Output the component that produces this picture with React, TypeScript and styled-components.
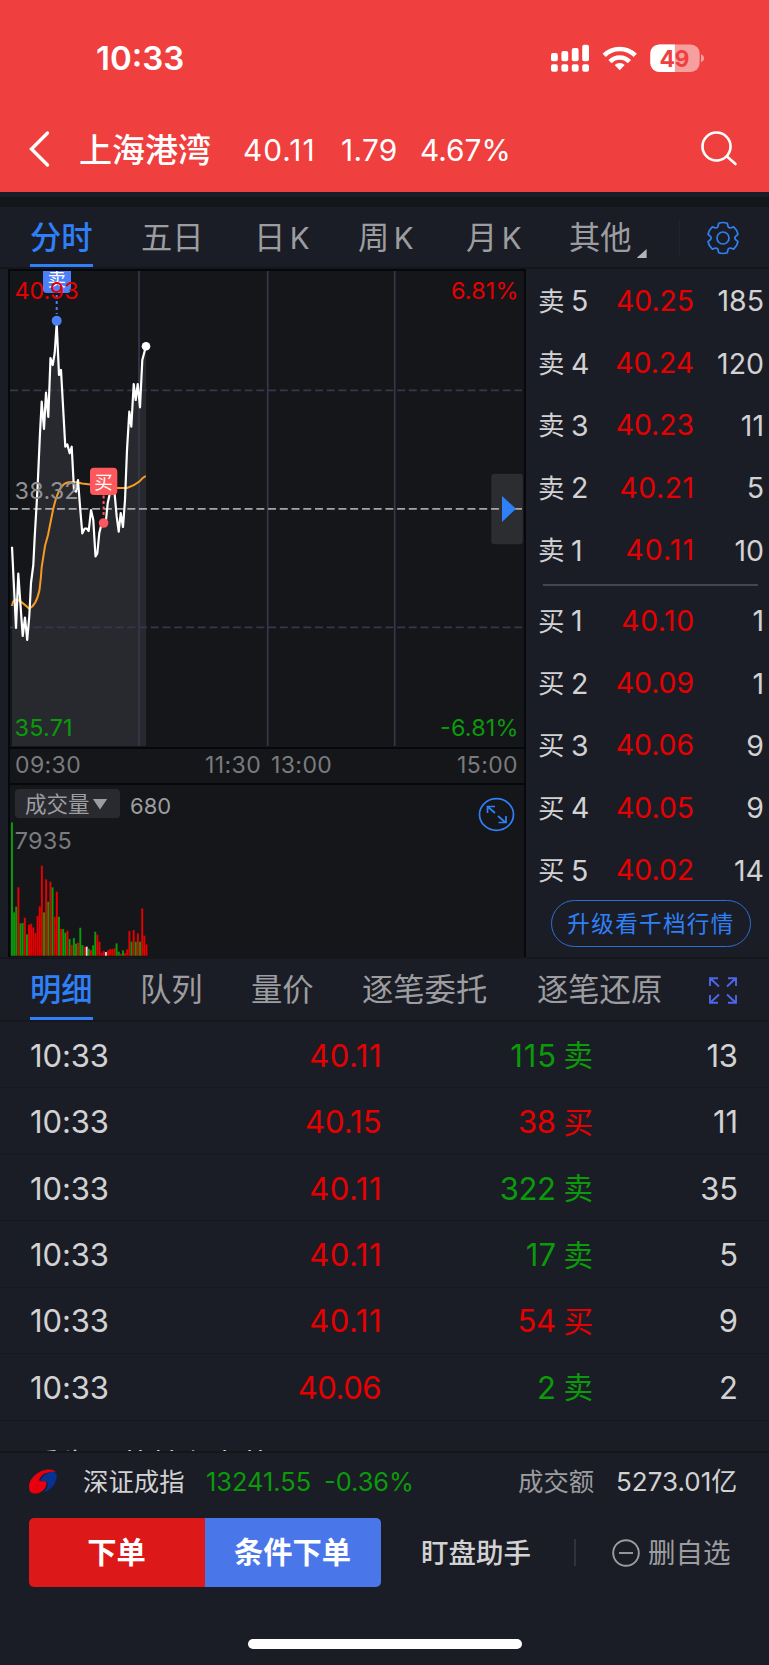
import React from "react";
import styled, { createGlobalStyle } from "styled-components";

const RED = "#e60000";
const GREEN = "#0a9a0a";
const BLUE = "#2f80f7";
const GREY = "#9d9da0";
const LIGHT = "#d2d2d3";
const PANEL = "#1b1d26";
const DARK = "#15161a";

const Global = createGlobalStyle`
  * { box-sizing: border-box; }
  body {
    margin: 0;
    background: ${PANEL};
    font-family: Inter, "Noto Sans CJK SC", sans-serif;
    color: ${LIGHT};
  }
  svg { display: block; flex: none; }
`;

const Page = styled.div`
  width: 769px;
  height: 1665px;
  overflow: hidden;
  display: flex;
  flex-direction: column;
  background: ${PANEL};
  white-space: nowrap;
`;

const Header = styled.header`
  height: 192px;
  background: #ef3f3e;
  color: #fff;
  flex: none;
`;

const StatusBar = styled.div`
  height: 115px;
  padding: 0 65px 0 96px;
  display: flex;
  align-items: center;
  justify-content: space-between;
`;

const Clock = styled.span`
  font-size: 33px;
  font-weight: 600;
`;

const NavBar = styled.div`
  height: 68px;
  padding-left: 28px;
  display: grid;
  align-items: center;
  grid-template-columns: 51px 164px 98px 79px 281px 40px;
`;

const StockName = styled.h1`
  margin: 0;
  padding-top: 1px;
  font-size: 33px;
  line-height: 44px;
  font-weight: 500;
`;

const Quote = styled.span<{ $spacing?: number }>`
  padding-top: 1px;
  font-size: 29.8px;
  line-height: 44px;
  letter-spacing: ${(p) => p.$spacing ?? 0}px;
`;

const Band = styled.div`
  height: 15px;
  flex: none;
  border-top: 5px solid #1a1d26;
  background: #14161a;
`;

const TabBar = styled.nav<{ $h: number; $cols: string }>`
  height: ${(p) => p.$h}px;
  flex: none;
  padding-left: 30px;
  display: grid;
  grid-template-columns: ${(p) => p.$cols};
  border-bottom: 2px solid #15171c;
`;

const Tab = styled.div<{ $active?: boolean }>`
  justify-self: start;
  display: flex;
  align-items: center;
  padding-top: 5px;
  font-size: 31.3px;
  line-height: 51px;
  font-weight: ${(p) => (p.$active ? 500 : 400)};
  color: ${(p) => (p.$active ? BLUE : GREY)};
  border-bottom: 3px solid ${(p) => (p.$active ? BLUE : "transparent")};
  word-spacing: -4.5px;
`;

const Latin = styled.span`
  font-size: 29.5px;
`;

const Corner = styled.i`
  width: 10px;
  height: 9px;
  margin: 31px 0 0 5px;
  background: #b4b4b6;
  clip-path: polygon(100% 0, 100% 100%, 0 100%);
`;

const TabIcon = styled.div<{ $line?: boolean }>`
  display: flex;
  align-items: center;
  padding-left: ${(p) => (p.$line ? 26 : 27)}px;
  margin: 12px 0 11px;
  border-left: 1px solid ${(p) => (p.$line ? "#20232c" : "transparent")};
`;

const Market = styled.section`
  height: 690px;
  flex: none;
  display: flex;
  border-bottom: 2px solid #15171c;
`;

const Charts = styled.div`
  width: 518px;
  margin-left: 8px;
  border: 2px solid #07080b;
  border-bottom: 0;
  background: ${DARK};
`;

const TimeAxis = styled.div`
  height: 38px;
  padding: 0 6px 2px 5px;
  border-top: 2px solid #07080b;
  border-bottom: 2px solid #07080b;
  display: grid;
  grid-template-columns: 190px 66px 1fr auto;
  align-items: center;
  font-size: 23px;
  letter-spacing: 0.4px;
  color: #7a7b7e;
`;

const VolumeHead = styled.div`
  height: 33px;
  padding: 4px 9px 0 5px;
  display: flex;
  align-items: flex-start;
`;

const Chip = styled.button`
  width: 105px;
  height: 29px;
  padding: 1px 0 0 10px;
  border: 0;
  border-radius: 4px;
  background: #282a2f;
  color: ${GREY};
  font: inherit;
  font-size: 21.5px;
  line-height: 27px;
  display: flex;
  align-items: center;
`;

const Arrow = styled.i`
  width: 15px;
  height: 11px;
  margin: 0 0 0 3px;
  background: ${GREY};
  clip-path: polygon(0 0, 100% 0, 50% 100%);
`;

const Volume = styled.span`
  flex: 1;
  margin-left: 10px;
  font-size: 22px;
  line-height: 35px;
  color: ${GREY};
`;

const ExpandWrap = styled.div`
  padding-top: 8px;
`;

const Book = styled.aside`
  flex: 1;
  display: flex;
  flex-direction: column;
  padding-top: 0.5px;
`;

const BookRow = styled.div`
  height: 62.4px;
  padding: 0 5px 0 12px;
  display: grid;
  grid-template-columns: 33px 30px 93px 1fr;
  align-items: center;
  font-size: 28.5px;
`;

const Side = styled.span`
  font-size: 26.5px;
  line-height: 40px;
`;

const Price = styled.span<{ $spacing: number }>`
  text-align: right;
  color: ${RED};
  font-size: 28.3px;
  letter-spacing: ${(p) => p.$spacing}px;
  margin-right: ${(p) => -p.$spacing}px;
`;

const Qty = styled.span`
  text-align: right;
`;

const BookLine = styled.div`
  height: 2px;
  margin: 3px 11px 3px 17px;
  background: #434550;
`;

const Upgrade = styled.button`
  width: 200px;
  height: 47px;
  margin: -1px 0 0 25px;
  padding: 0 0 3px;
  border: 1.5px solid #2b6fd0;
  border-radius: 24px;
  background: transparent;
  color: ${BLUE};
  font: inherit;
  font-size: 22.5px;
  letter-spacing: 1.4px;
`;

const Trades = styled.section`
  height: 431px;
  flex: none;
  overflow: hidden;
  border-bottom: 2px solid #14161a;
`;

const TradeRow = styled.div`
  height: 66.45px;
  padding: 1px 31px 0 30px;
  display: grid;
  grid-template-columns: 130px 221.5px 174.5px 37px 1fr;
  align-items: center;
  border-bottom: 1px solid #16181e;
  font-size: 31px;
  letter-spacing: -0.1px;
`;

const Cell = styled.span<{ $color?: string; $spacing?: number }>`
  text-align: right;
  color: ${(p) => p.$color ?? LIGHT};
  letter-spacing: ${(p) => p.$spacing ?? -0.3}px;
  margin-right: ${(p) => -(p.$spacing ?? -0.3)}px;
`;

const TradeTime = styled.span``;

const TradeSide = styled.span<{ $color: string }>`
  justify-self: end;
  font-size: 29.5px;
  line-height: 40px;
  color: ${(p) => p.$color};
`;

const Notice = styled.div`
  padding: 23.6px 30px 0;
  font-size: 30px;
  line-height: 40px;
`;

const Ticker = styled.div`
  height: 56px;
  flex: none;
  padding: 1px 0 0 29px;
  display: grid;
  grid-template-columns: 54px 123px 118px 194px 98px auto;
  align-items: center;
  line-height: 36px;
`;

const TickText = styled.span<{ $color?: string; $size?: number }>`
  font-size: ${(p) => p.$size ?? 25.4}px;
  color: ${(p) => p.$color ?? LIGHT};
`;

const Actions = styled.div`
  height: 69px;
  margin-top: 9px;
  flex: none;
  padding-left: 29px;
  display: flex;
  align-items: center;
`;

const Orders = styled.div`
  width: 352px;
  height: 69px;
  display: flex;
  border-radius: 5px;
  overflow: hidden;
`;

const OrderButton = styled.button<{ $bg: string }>`
  flex: 1;
  border: 0;
  padding: 0 1px 5px 0;
  background: ${(p) => p.$bg};
  color: #fff;
  font: inherit;
  font-size: 29.3px;
  font-weight: 600;
`;

const Helper = styled.span`
  width: 153px;
  margin-left: 40px;
  padding-bottom: 3px;
  font-size: 27.5px;
  font-weight: 500;
`;

const Divider = styled.i`
  width: 2px;
  height: 27px;
  margin-right: 36px;
  background: #30323c;
`;

const Remove = styled.span`
  margin-left: 8px;
  padding-bottom: 3px;
  font-size: 27.5px;
  color: ${GREY};
`;

const HomeBar = styled.div`
  width: 274px;
  height: 10px;
  margin: 52px 0 0 248px;
  flex: none;
  border-radius: 5px;
  background: #fff;
`;

const StatusIcons = () => (
  <svg width="154" height="32" viewBox="550 41 154 32" fill="#fff">
    {[52, 50, 47, 43.7].map((top, i) => (
      <g key={i}>
        <rect x={551 + i * 10.4} y={top} width="6.8" height={60.3 - top} rx="2" />
        <rect x={551 + i * 10.4} y="63.3" width="6.8" height="7.4" rx="2" />
      </g>
    ))}
    <g fill="none" stroke="#fff" strokeWidth="4.6">
      <path d="M604.2 54.4a22 22 0 0 1 31 0" />
      <path d="M610 60.6a13.6 13.6 0 0 1 19.4 0" />
    </g>
    <path d="M619.7 69.3l-5-5.2a7.2 7.2 0 0 1 10 0z" />
    <rect x="650.3" y="43.4" width="49.4" height="27.6" rx="9" opacity=".5" />
    <path d="M659.3 43.4h15.6V71h-15.6a9 9 0 0 1-9-9v-9.6a9 9 0 0 1 9-9z" />
    <path d="M701 53.4q3 .8 3 3.8t-3 3.8z" opacity=".5" />
    <text x="659.5" y="65.6" fontSize="23" fontWeight="700" fill="#ef3f3e" textLength="30">49</text>
  </svg>
);

const gearPath = (() => {
  const pts: string[] = [];
  for (let i = 0; i < 6; i++) {
    const a = (i * Math.PI) / 3 - Math.PI / 2;
    const at = (r: number, d: number) =>
      `${(17 + r * Math.cos(a + d)).toFixed(2)} ${(17 + r * Math.sin(a + d)).toFixed(2)}`;
    pts.push(
      `${i ? "L" : "M"}${at(12.4, -0.42)}L${at(15.4, -0.28)}Q${at(16.2, 0)} ${at(15.4, 0.28)}L${at(12.4, 0.42)}Q${at(11.4, 0.52)} ${at(12.4, 0.62)}`
    );
  }
  return pts.join("") + "Z";
})();

const Gear = () => (
  <svg width="34" height="34" viewBox="0 0 34 34" fill="none" stroke={BLUE} strokeWidth="1.7" strokeLinejoin="round">
    <path d={gearPath} />
    <circle cx="17" cy="17" r="6" />
  </svg>
);

const priceLine =
  "12,546.7 16,628 18.3,573.5 22.7,636 25,617.5 27.2,640 29.3,616 31,583 33.3,565 34.7,537 36.7,503 37.6,487 40,433 41.7,401.7 44,429 46,392.7 48.3,417 50.5,358 52.7,365 54.7,353 56.7,323 59,375 61,370 65.3,446.7 67.3,444.3 69.7,453.3 71.7,446.7 74,490 76,491.7 78,480 80.3,510 82.3,533.3 84.7,528.5 86.7,528.5 88.7,531 91,510 93.3,520 95.5,556.5 97.3,553.5 99.3,533 101.3,525 103.7,523 106,520 107.7,503 110,493 114.3,490 116.7,516.7 118.7,531.7 120.7,513 123,527 125,500 127,450 129.3,411.7 131.3,426.7 133.7,384 135.7,400 137.7,384 140,407.3 142.3,360 146,346";
const averageLine =
  "M12 606Q13 598 18 600Q22 602 29 608.5Q36 606 39.5 590Q41 578 41.7 567L45 546L48 535L53 510C57 492 61 485 66 483Q72 481 82 483.5L103 486L115 488H127Q134 486 140 481Q144 476 146 476.5";

const PriceChart = () => (
  <svg width="514" height="476" viewBox="10 271 514 476">
    <polygon points={`12,746 ${priceLine} 146,746`} fill="#28292f" />
    <g stroke="#35374a" strokeWidth="1.7">
      <path d="M139 271V746M267.7 271V746M394.7 271V746" />
      <path d="M10 390.3H522M10 627.3H522" strokeDasharray="8 3.73" />
    </g>
    <rect x="491.3" y="473.7" width="31.5" height="70.5" rx="3" fill="#2c2d31" />
    <path d="M10 508.8H522" stroke="#a5a5a8" strokeWidth="1.8" strokeDasharray="8 3.73" />
    <path d="M502 496L516 508.8L502 522z" fill={BLUE} />
    <path d={averageLine} fill="none" stroke="#f79a22" strokeWidth="2" />
    <polyline points={priceLine} fill="none" stroke="#fff" strokeWidth="2.2" strokeLinejoin="round" />
    <circle cx="146" cy="346.3" r="4.3" fill="#fff" />
    <rect x="43" y="262" width="28" height="31" rx="4" fill="#4c80f8" />
    <text x="47.5" y="286" fontSize="18.5" fill="#fff">卖</text>
    <path d="M56.7 295V314" stroke="#4c80f8" strokeWidth="2" strokeDasharray="3 3" />
    <circle cx="56.7" cy="320.8" r="5" fill="#4c80f8" />
    <g fontSize="23.4">
      <text x="14.6" y="299" fill={RED} textLength="64">40.93</text>
      <text x="14.6" y="499" fill="#909093" textLength="64">38.32</text>
      <text x="14.6" y="735.8" fill={GREEN} textLength="58">35.71</text>
      <text x="451" y="299" fill={RED} textLength="67.5">6.81%</text>
      <text x="440" y="735.8" fill={GREEN} textLength="78.5">-6.81%</text>
    </g>
    <rect x="90" y="467.7" width="27.3" height="27.3" rx="4" fill="#ff585c" />
    <text x="94.3" y="488.5" fontSize="18.5" fill="#fff">买</text>
    <path d="M103.6 495.5V515" stroke="#ff585c" strokeWidth="2" strokeDasharray="3 2.5" />
    <circle cx="103.6" cy="523" r="4.8" fill="#ff585c" />
  </svg>
);

const bars =
  "g400 g130 g147 r205 g97 g98 r114 g64 r93 r96 r85 r68 r119 r148 r270 g130 r229 g162 r222 g205 r116 r192 g117 r80 g80 g69 r75 g50 r32 g53 g36 r39 g84 g32 r27 w27 g21 r17 g31 g72 r63 r42 r9 r14 w11 r16 r20 r20 r22 g37 g12 r6 g16 r8 r19 r74 g42 r77 g42 r67 g42 r142 r60 r34"
    .split(" ")
    .map((s) => ({ fill: { g: GREEN, r: RED, w: "#ddd" }[s[0]], h: Number(s.slice(1)) / 3 }));

const VolumeChart = () => (
  <svg width="514" height="138" viewBox="10 818 514 138">
    {bars.map((b, i) => (
      <rect key={i} x={11 + i * 2.135} y={955.7 - b.h} width="1.95" height={b.h} fill={b.fill} />
    ))}
    <text x="14.8" y="849" fontSize="23.4" fill="#7a7b7e" textLength="57">7935</text>
  </svg>
);

const Logo = () => (
  <svg width="28" height="26" viewBox="0 0 28 26">
    <path d="M14 23.5C20 19 20 13 16 12L11 12C13 6 20 3 24 2.5Q28.5 4 27.5 9C26 17 20 22 14 23.5z" fill="#063295" />
    <path d="M0 18C0 9 10 .5 20 .5Q25 .5 27 3C22 2 15 4 12.5 7C9 11 10 13 14 12Q19 12 17 17C15 22 10 25 5 24.5Q0 24 0 18z" fill="#e8000f" />
  </svg>
);

const asks = [
  ["卖", "5", "40.25", "185"],
  ["卖", "4", "40.24", "120"],
  ["卖", "3", "40.23", "11"],
  ["卖", "2", "40.21", "5"],
  ["卖", "1", "40.11", "10"],
];
const bids = [
  ["买", "1", "40.10", "1"],
  ["买", "2", "40.09", "1"],
  ["买", "3", "40.06", "9"],
  ["买", "4", "40.05", "9"],
  ["买", "5", "40.02", "14"],
];
const trades = [
  ["40.11", "115", "卖", "13"],
  ["40.15", "38", "买", "11"],
  ["40.11", "322", "卖", "35"],
  ["40.11", "17", "卖", "5"],
  ["40.11", "54", "买", "9"],
  ["40.06", "2", "卖", "2"],
];

const countOnes = (s: string) => s.split("1").length - 1;

const BookRows = ({ rows }: { rows: string[][] }) => (
  <>
    {rows.map(([side, level, price, qty]) => (
      <BookRow key={side + level}>
        <Side>{side}</Side>
        <span>{level}</span>
        <Price $spacing={countOnes(price) * 0.55}>{price}</Price>
        <Qty>{qty}</Qty>
      </BookRow>
    ))}
  </>
);

const KTab = ({ unit }: { unit: string }) => (
  <Tab>
    <span>
      {unit} <Latin>K</Latin>
    </span>
  </Tab>
);

export default function App() {
  return (
    <Page>
      <Global />
      <Header>
        <StatusBar>
          <Clock>10:33</Clock>
          <StatusIcons />
        </StatusBar>
        <NavBar>
          <svg width="24" height="38" viewBox="0 0 24 38" fill="none" stroke="#fff" strokeWidth="3.4" strokeLinecap="round">
            <path d="M19.5 3L3.5 19L19.5 35" />
          </svg>
          <StockName>上海港湾</StockName>
          <Quote $spacing={1}>40.11</Quote>
          <Quote $spacing={0.3}>1.79</Quote>
          <Quote>4.67%</Quote>
          <svg width="38" height="38" viewBox="0 0 38 38" fill="none" stroke="#fff" strokeWidth="2.6" strokeLinecap="round">
            <circle cx="15.5" cy="16.5" r="14" />
            <path d="M26 26.5L34.5 34" />
          </svg>
        </NavBar>
      </Header>
      <Band />
      <TabBar $h={62} $cols="111px 113px 104px 108px 103px 110px auto">
        <Tab $active>分时</Tab>
        <Tab>五日</Tab>
        <KTab unit="日" />
        <KTab unit="周" />
        <KTab unit="月" />
        <Tab>
          其他
          <Corner />
        </Tab>
        <TabIcon $line>
          <Gear />
        </TabIcon>
      </TabBar>
      <Market>
        <Charts>
          <PriceChart />
          <TimeAxis>
            <span>09:30</span>
            <span>11:30</span>
            <span>13:00</span>
            <span>15:00</span>
          </TimeAxis>
          <VolumeHead>
            <Chip>
              成交量
              <Arrow />
            </Chip>
            <Volume>680</Volume>
            <ExpandWrap>
              <svg width="37" height="35" viewBox="0 0 37 35" fill="none" stroke={BLUE} strokeWidth="1.7">
                <ellipse cx="18.5" cy="17.5" rx="17" ry="15.8" />
                <path d="M9.5 16V9.5H17M10 10L17 16M20 19L27.5 25.5M20.5 25.5H28V19" />
              </svg>
            </ExpandWrap>
          </VolumeHead>
          <VolumeChart />
        </Charts>
        <Book>
          <BookRows rows={asks} />
          <BookLine />
          <BookRows rows={bids} />
          <Upgrade>升级看千档行情</Upgrade>
        </Book>
      </Market>
      <TabBar $h={63} $cols="110px 111px 111px 175px 144px auto">
        <Tab $active>明细</Tab>
        <Tab>队列</Tab>
        <Tab>量价</Tab>
        <Tab>逐笔委托</Tab>
        <Tab>逐笔还原</Tab>
        <TabIcon>
          <svg width="28" height="27" viewBox="0 0 28 27" fill="none" stroke="#4d66e8" strokeWidth="1.9">
            <path d="M1 9V1.2H9M1.5 1.5L10 9.5M19 1.2H27V9M26.5 1.5L18 9.5M1 18V25.8H9M1.5 25.5L10 17.5M19 25.8H27V18M26.5 25.5L18 17.5" />
          </svg>
        </TabIcon>
      </TabBar>
      <Trades>
        {trades.map(([price, amount, side, count], i) => {
          const color = side === "买" ? RED : GREEN;
          return (
            <TradeRow key={i}>
              <TradeTime>10:33</TradeTime>
              <Cell $color={RED} $spacing={countOnes(price) * 0.5 - 0.5}>
                {price}
              </Cell>
              <Cell $color={color} $spacing={countOnes(amount) * 0.6 - 0.4}>
                {amount}
              </Cell>
              <TradeSide $color={color}>{side}</TradeSide>
              <Cell>{count}</Cell>
            </TradeRow>
          );
        })}
        <Notice>看先一共其主少共</Notice>
      </Trades>
      <Ticker>
        <Logo />
        <TickText>深证成指</TickText>
        <TickText $color={GREEN}>13241.55</TickText>
        <TickText $color={GREEN}>-0.36%</TickText>
        <TickText $color={GREY}>成交额</TickText>
        <TickText $size={26}>5273.01亿</TickText>
      </Ticker>
      <Actions>
        <Orders>
          <OrderButton $bg="#dc1818">下单</OrderButton>
          <OrderButton $bg="#4977ea">条件下单</OrderButton>
        </Orders>
        <Helper>盯盘助手</Helper>
        <Divider />
        <svg width="28" height="28" viewBox="0 0 28 28" fill="none" stroke={GREY} strokeWidth="1.9">
          <circle cx="14" cy="14" r="12.8" />
          <path d="M7 14H21" />
        </svg>
        <Remove>删自选</Remove>
      </Actions>
      <HomeBar />
    </Page>
  );
}
